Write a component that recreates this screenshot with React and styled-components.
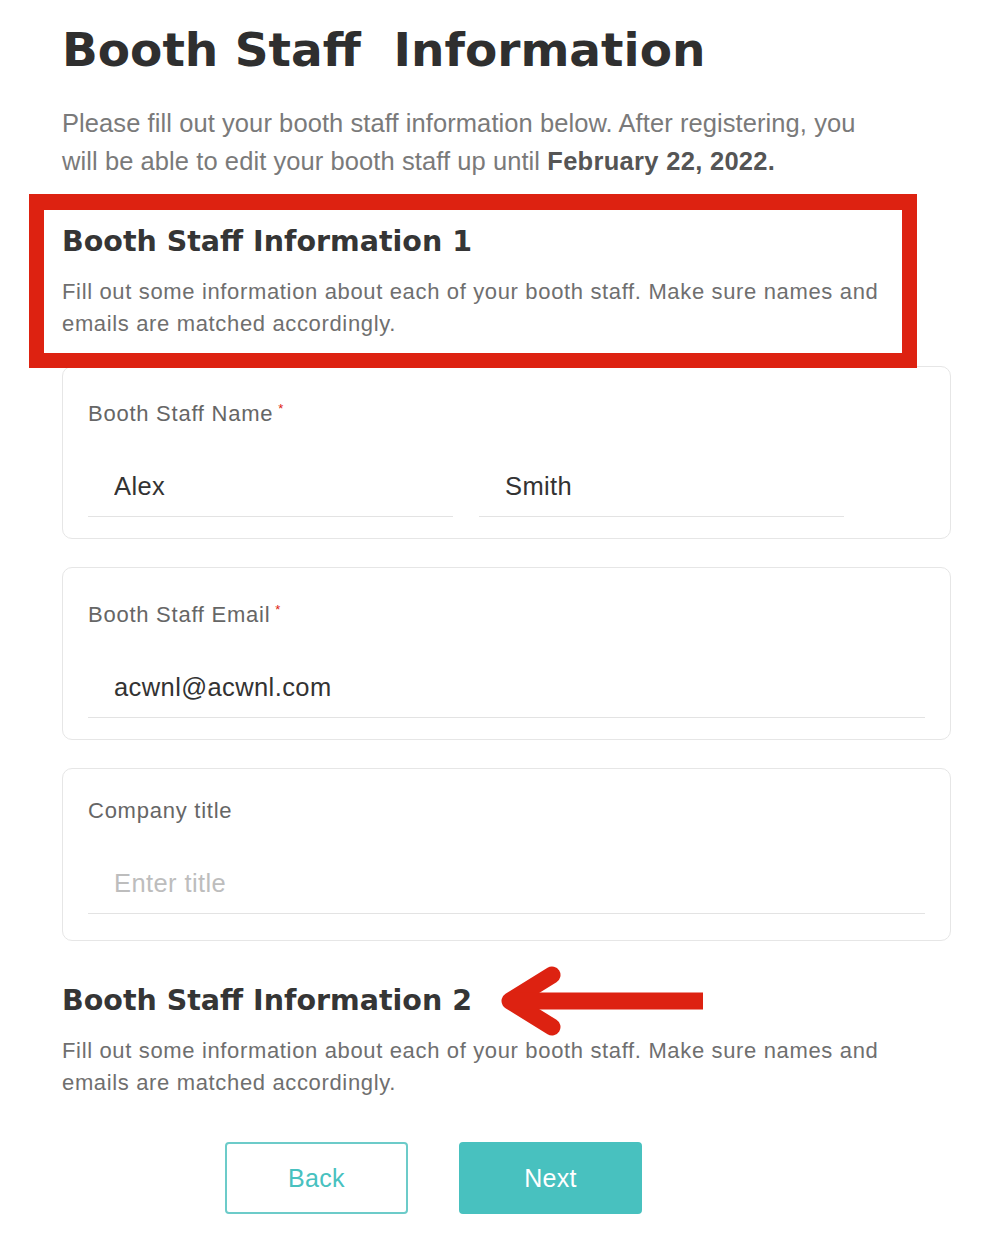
import React from "react";
import styled, { createGlobalStyle } from "styled-components";

const theme = {
	title: "#2f2f2f",
	body: "#7a7a7a",
	label: "#666666",
	value: "#333333",
	line: "#e3e3e3",
	card: "#e6e6e6",
	red: "#dd2211",
	teal: "#48c1bf",
};

const GlobalStyle = createGlobalStyle`
	html, body {
		margin: 0;
		padding: 0;
		background: #ffffff;
	}
	body {
		font-family: "Liberation Sans", Arial, sans-serif;
		-webkit-font-smoothing: antialiased;
	}
	* {
		box-sizing: border-box;
	}
`;

const Page = styled.main`
	width: 1000px;
	padding: 22px 0 40px 62px;
`;

const Column = styled.div`
	width: 889px;
	display: flex;
	flex-direction: column;
`;

const Title = styled.h1`
	margin: 0;
	font-family: "DejaVu Sans", sans-serif;
	font-weight: 700;
	font-size: 47px;
	line-height: 56px;
	color: ${theme.title};
	white-space: pre;
`;

const Intro = styled.p`
	margin: 26px 0 0;
	width: 825px;
	font-size: 25.5px;
	letter-spacing: 0.08px;
	line-height: 38px;
	color: ${theme.body};

	strong {
		color: #555555;
		font-weight: 700;
		letter-spacing: 0.3px;
	}
`;

const Highlight = styled.section`
	position: relative;
	z-index: 1;
	margin: 14px 0 0 -33px;
	width: 888px;
	border: 15px solid ${theme.red};
	border-top-width: 16px;
	padding: 14px 18px 13px;
	background: #ffffff;
`;

const SectionHead = styled.div`
	position: relative;
	align-self: flex-start;
	margin-top: ${(p) => p.$top || 0}px;
`;

const SectionTitle = styled.h2`
	margin: 0;
	font-family: "DejaVu Sans", sans-serif;
	font-weight: 700;
	font-size: 28.5px;
	line-height: 36px;
	color: #353535;
`;

const SectionText = styled.p`
	margin: 16px 0 0;
	width: 840px;
	font-size: 22px;
	letter-spacing: 0.65px;
	line-height: 32px;
	color: #6f6f6f;
`;

const Arrow = styled.svg`
	position: absolute;
	left: calc(100% + 28px);
	top: -17px;
`;

const Card = styled.div`
	margin-top: ${(p) => p.$top}px;
	height: 173px;
	border: 1px solid ${theme.card};
	border-radius: 10px;
	padding: 30px 25px 0;
	background: #ffffff;
`;

const Label = styled.label`
	display: block;
	font-size: 22px;
	letter-spacing: 0.75px;
	line-height: 24px;
	color: ${theme.label};

	sup {
		color: ${theme.red};
		font-size: 13px;
		margin-left: 5px;
		vertical-align: 8px;
	}
`;

const Row = styled.div`
	margin-top: 45px;
	display: grid;
	grid-template-columns: ${(p) => (p.$split ? "365px 365px" : "1fr")};
	column-gap: 26px;
`;

const Input = styled.input`
	display: block;
	width: 100%;
	height: 46px;
	padding: 0 0 15px 26px;
	border: none;
	border-bottom: 1px solid ${theme.line};
	outline: none;
	background: transparent;
	font-family: inherit;
	font-size: 25.5px;
	letter-spacing: 0.4px;
	color: ${theme.value};

	&::placeholder {
		color: #bdbdbd;
	}
`;

const Buttons = styled.div`
	margin: 43px 0 0 163px;
	display: flex;
	gap: 51px;
`;

const Button = styled.button`
	width: 183px;
	height: 72px;
	border-radius: 4px;
	font-family: inherit;
	font-size: 25px;
	letter-spacing: 0.3px;
	cursor: pointer;
	border: 2px solid ${(p) => (p.$primary ? theme.teal : "#6ccbc9")};
	background: ${(p) => (p.$primary ? theme.teal : "#ffffff")};
	color: ${(p) => (p.$primary ? "#ffffff" : theme.teal)};
`;

const Field = ({ label, required, top, children, split }) => (
	<Card $top={top}>
		<Label>
			{label}
			{required && <sup>*</sup>}
		</Label>
		<Row $split={split}>{children}</Row>
	</Card>
);

const App = () => {
	return (
		<>
			<GlobalStyle />
			<Page>
				<Column>
					<Title>{"Booth Staff  Information"}</Title>
					<Intro>
						Please fill out your booth staff information below. After registering, you will be able
						to edit your booth staff up until <strong>February 22, 2022.</strong>
					</Intro>

					<Highlight>
						<SectionTitle>Booth Staff Information 1</SectionTitle>
						<SectionText>
							Fill out some information about each of your booth staff. Make sure names and
							emails are matched accordingly.
						</SectionText>
					</Highlight>

					<Field label="Booth Staff Name" required top={-2} split>
						<Input defaultValue="Alex" readOnly />
						<Input defaultValue="Smith" readOnly />
					</Field>
					<Field label="Booth Staff Email" required top={28}>
						<Input defaultValue="acwnl@acwnl.com" readOnly />
					</Field>
					<Field label="Company title" top={28}>
						<Input placeholder="Enter title" />
					</Field>

					<SectionHead $top={42}>
						<SectionTitle>Booth Staff Information 2</SectionTitle>
						<Arrow width="210" height="70" viewBox="0 0 210 70">
							<path
								d="M52 9 L10 35 L52 61"
								stroke={theme.red}
								strokeWidth="17"
								fill="none"
								strokeLinecap="round"
								strokeLinejoin="round"
							/>
							<path d="M12 35 H203" stroke={theme.red} strokeWidth="17" />
						</Arrow>
					</SectionHead>
					<SectionText>
						Fill out some information about each of your booth staff. Make sure names and emails
						are matched accordingly.
					</SectionText>

					<Buttons>
						<Button>Back</Button>
						<Button $primary>Next</Button>
					</Buttons>
				</Column>
			</Page>
		</>
	);
};

export default App;
